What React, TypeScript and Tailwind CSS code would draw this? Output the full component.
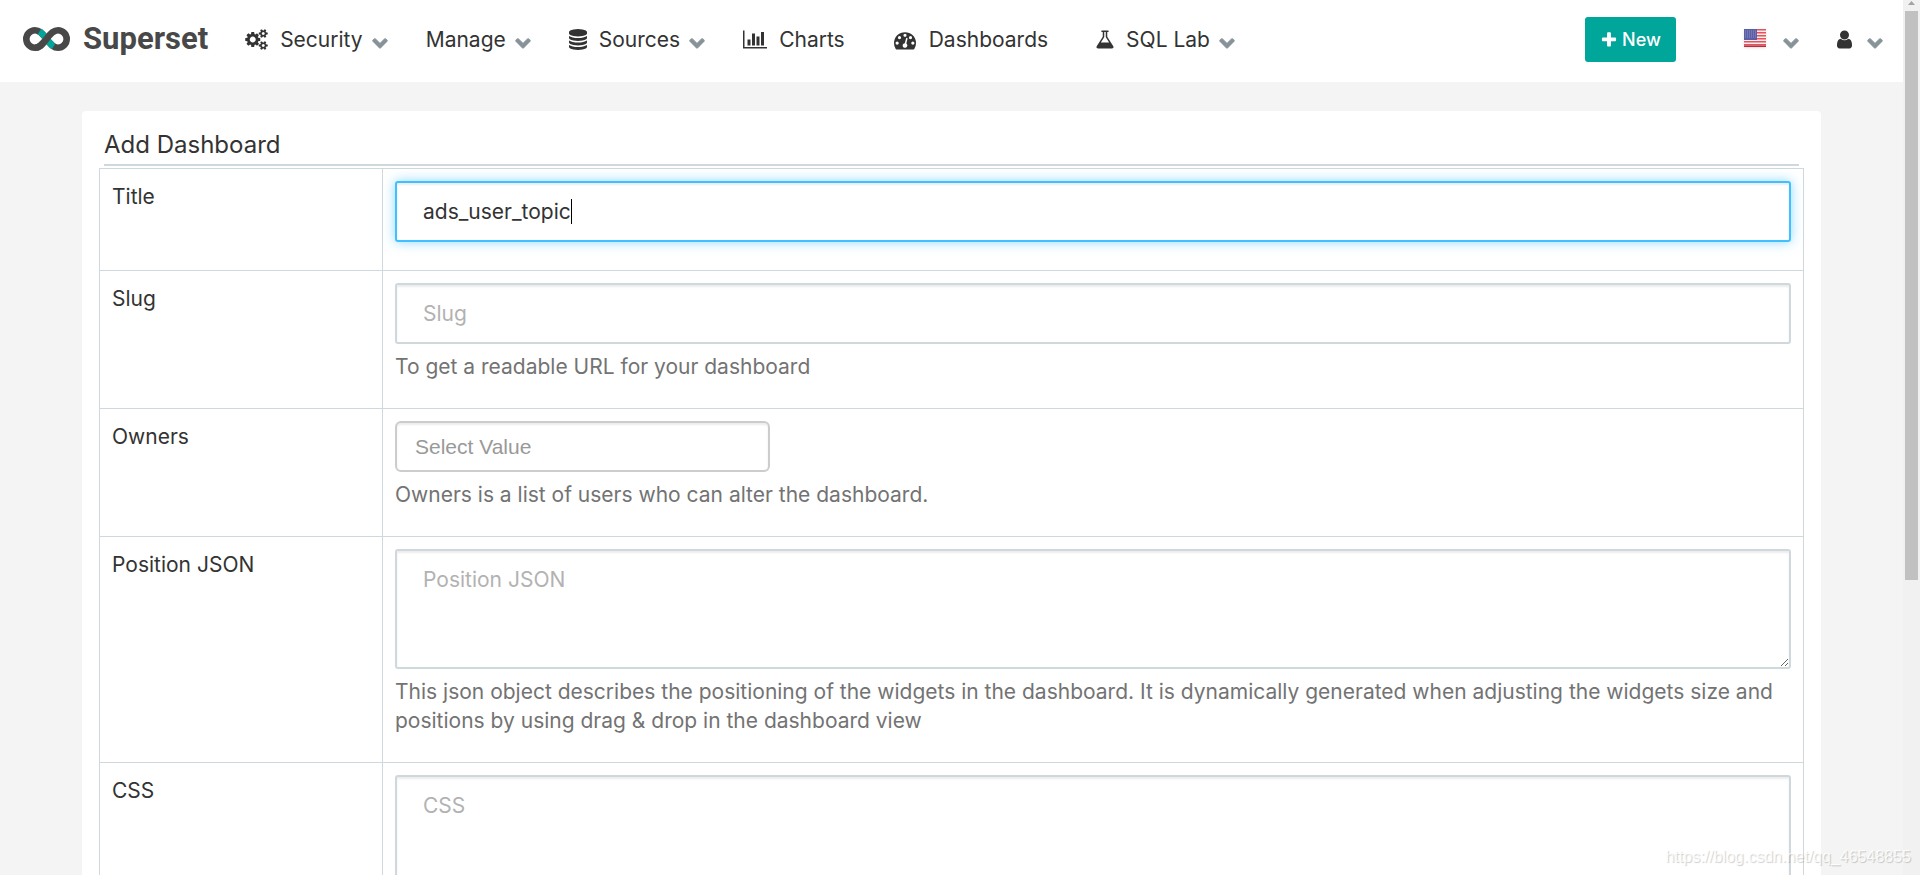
import { ReactNode } from 'react'

const paths = {
    cogs: 'M896 896q0-106-75-181t-181-75-181 75-75 181 75 181 181 75 181-75 75-181zm768 512q0-52-38-90t-90-38-90 38-38 90q0 53 37.5 90.5t90.5 37.5 90.5-37.5 37.5-90.5zm0-1024q0-52-38-90t-90-38-90 38-38 90q0 53 37.5 90.5t90.5 37.5 90.5-37.5 37.5-90.5zm-384 421v185q0 10-7 19.5t-16 10.5l-155 24q-11 35-32 76 34 48 90 115 7 11 7 20 0 12-7 19-23 30-82.5 89.5t-78.5 59.5q-11 0-21-7l-115-90q-37 19-77 31-11 108-23 155-7 24-30 24h-186q-11 0-20-7.5t-10-17.5l-23-153q-34-10-75-31l-118 89q-7 7-20 7-11 0-21-8-144-133-144-160 0-9 7-19 10-14 41-53t47-61q-23-44-35-82l-152-24q-10-1-17-9.5t-7-19.5v-185q0-10 7-19.5t16-10.5l155-24q11-35 32-76-34-48-90-115-7-11-7-20 0-12 7-20 22-30 82-89t79-59q11 0 21 7l115 90q34-18 77-32 11-108 23-154 7-24 30-24h186q11 0 20 7.5t10 17.5l23 153q34 10 75 31l118-89q8-7 20-7 11 0 21 8 144 133 144 160 0 8-7 19-12 16-42 54t-45 60q23 48 34 82l152 23q10 2 17 10.5t7 19.5zm640 533v140q0 16-149 31-12 27-30 52 51 113 51 138 0 4-4 7-122 71-124 71-8 0-46-47t-52-68q-20 2-30 2t-30-2q-14 21-52 68t-46 47q-2 0-124-71-4-3-4-7 0-25 51-138-18-25-30-52-149-15-149-31v-140q0-16 149-31 13-29 30-52-51-113-51-138 0-4 4-7 4-2 35-20t59-34 30-16q8 0 46 46.5t52 67.5q20-2 30-2t30 2q51-71 92-112l6-2q4 0 124 70 4 3 4 7 0 25-51 138 17 23 30 52 149 15 149 31zm0-1024v140q0 16-149 31-12 27-30 52 51 113 51 138 0 4-4 7-122 71-124 71-8 0-46-47t-52-68q-20 2-30 2t-30-2q-14 21-52 68t-46 47q-2 0-124-71-4-3-4-7 0-25 51-138-18-25-30-52-149-15-149-31v-140q0-16 149-31 13-29 30-52-51-113-51-138 0-4 4-7 4-2 35-20t59-34 30-16q8 0 46 46.5t52 67.5q20-2 30-2t30 2q51-71 92-112l6-2q4 0 124 70 4 3 4 7 0 25-51 138 17 23 30 52 149 15 149 31z',
    database:
        'M896 768q237 0 443-43t325-127v170q0 69-103 128t-280 93.5-385 34.5-385-34.5-280-93.5-103-128v-170q119 84 325 127t443 43zm0 768q237 0 443-43t325-127v170q0 69-103 128t-280 93.5-385 34.5-385-34.5-280-93.5-103-128v-170q119 84 325 127t443 43zm0-384q237 0 443-43t325-127v170q0 69-103 128t-280 93.5-385 34.5-385-34.5-280-93.5-103-128v-170q119 84 325 127t443 43zm0-1152q208 0 385 34.5t280 93.5 103 128v128q0 69-103 128t-280 93.5-385 34.5-385-34.5-280-93.5-103-128v-128q0-69 103-128t280-93.5 385-34.5z',
    barChart:
        'M640 896v512h-256v-512h256zm384-512v1024h-256v-1024h256zm1024 1152v128h-2048v-1536h128v1408h1920zm-640-896v768h-256v-768h256zm384-384v1152h-256v-1152h256z',
    dashboard:
        'M384 1152q0-53-37.5-90.5t-90.5-37.5-90.5 37.5-37.5 90.5 37.5 90.5 90.5 37.5 90.5-37.5 37.5-90.5zm192-448q0-53-37.5-90.5t-90.5-37.5-90.5 37.5-37.5 90.5 37.5 90.5 90.5 37.5 90.5-37.5 37.5-90.5zm428 481l101-382q6-26-7.5-48.5t-38.5-29.5-48 6.5-30 39.5l-101 382q-60 5-107 43.5t-63 98.5q-20 77 20 146t117 89 146-20 89-117q16-60-6-117t-72-91zm660-33q0-53-37.5-90.5t-90.5-37.5-90.5 37.5-37.5 90.5 37.5 90.5 90.5 37.5 90.5-37.5 37.5-90.5zm-640-640q0-53-37.5-90.5t-90.5-37.5-90.5 37.5-37.5 90.5 37.5 90.5 90.5 37.5 90.5-37.5 37.5-90.5zm448 192q0-53-37.5-90.5t-90.5-37.5-90.5 37.5-37.5 90.5 37.5 90.5 90.5 37.5 90.5-37.5 37.5-90.5zm320 448q0 261-141 483-19 29-54 29h-1402q-35 0-54-29-141-221-141-483 0-182 71-348t191-286 286-191 348-71 348 71 286 191 191 286 71 348z',
    flask: 'M1591 1448q56 89 21.5 152.5t-140.5 63.5h-1152q-106 0-140.5-63.5t21.5-152.5l503-793v-399h-64q-26 0-45-19t-19-45 19-45 45-19h512q26 0 45 19t19 45-19 45-45 19h-64v399zm-779-725l-272 429h712l-272-429-20-31v-436h-128v436z',
    plus: 'M1600 736v192q0 40-28 68t-68 28h-416v416q0 40-28 68t-68 28h-192q-40 0-68-28t-28-68v-416h-416q-40 0-68-28t-28-68v-192q0-40 28-68t68-28h416v-416q0-40 28-68t68-28h192q40 0 68 28t28 68v416h416q40 0 68 28t28 68z',
    user: 'M1536 1399q0 109-62.5 187t-150.5 78h-854q-88 0-150.5-78t-62.5-187q0-85 8.5-160.5t31.5-152 58.5-131 94-89 134.5-34.5q131 128 313 128t313-128q76 0 134.5 34.5t94 89 58.5 131 31.5 152 8.5 160.5zm-256-887q0 159-112.5 271.5t-271.5 112.5-271.5-112.5-112.5-271.5 112.5-271.5 271.5-112.5 271.5 112.5 112.5 271.5z',
    chevron:
        'M1683 808l-742 741q-19 19-45 19t-45-19l-742-741q-19-19-19-45.5t19-45.5l166-165q19-19 45-19t45 19l531 531 531-531q19-19 45-19t45 19l166 165q19 19 19 45.5t-19 45.5z',
}

const Icon = ({
    name,
    viewBox = '0 0 1792 1792',
    className,
}: {
    name: keyof typeof paths
    viewBox?: string
    className: string
}) => (
    <svg viewBox={viewBox} className={`shrink-0 fill-current ${className}`} aria-hidden="true">
        <path d={paths[name]} />
    </svg>
)

const Caret = () => (
    <Icon name="chevron" className="mt-1 h-4 w-4 stroke-current stroke-[120px] text-[#879399]" />
)

const Logo = () => (
    <svg viewBox="0 0 47 24" className="h-6 w-[47px]" aria-hidden="true">
        <g fill="none" strokeWidth="6.600">
            <path
                d="M23.500 12 C18.500 18.500 16 20.700 12 20.700 A8.700 8.700 0 0 1 12 3.300 C16 3.300 18.500 5.500 23.500 12 C28.500 18.500 31 20.700 35 20.700 A8.700 8.700 0 0 0 35 3.300"
                stroke="#484848"
            />
            <path d="M16.500 4.500 C19 6 21 8.700 23.500 12 C26 15.300 28 18 30.500 19.500" stroke="#00a699" />
            <path
                d="M12 20.700 C16 20.700 18.500 18.500 23.500 12 C28.500 5.500 31 3.300 35 3.300"
                stroke="#484848"
            />
        </g>
    </svg>
)

const Flag = () => (
    <svg viewBox="0 0 22 18" className="mb-[3px] h-[18px] w-[22px] shadow-sm" role="img" aria-label="English">
        <rect width="22" height="18" fill="#f7eeee" />
        {[0, 3, 6, 9, 12, 15].map((y) => (
            <rect key={y} y={y} width="22" height="1.500" fill="#e8505b" />
        ))}
        <rect y="16.500" width="22" height="1.500" fill="#b52f40" />
        <rect width="13" height="11" fill="#5a5fa5" />
        {[2, 4, 6, 8].map((y) => (
            <path key={y} d={`M1 ${y}h11`} stroke="#8f92c8" strokeWidth="1" strokeDasharray="1 1" />
        ))}
    </svg>
)

const NavItem = ({ icon, label, caret }: { icon?: ReactNode; label: string; caret?: boolean }) => (
    <li>
        <a href="#" className={`flex items-center gap-[9px] ${caret ? '' : 'pr-[10px]'}`}>
            {icon && <span className="pr-[3px]">{icon}</span>}
            <span>{label}</span>
            {caret && <Caret />}
        </a>
    </li>
)

const Navbar = () => (
    <header className="flex h-[82px] shrink-0 items-center bg-white pr-5 pb-[3px] pl-[23px]">
        <a href="#" className="flex items-center gap-[13px] pb-[2px]">
            <Logo />
            <span className="font-[Roboto] text-[31px] leading-8 font-bold text-[#484848]">
                Superset
            </span>
        </a>
        <nav className="flex flex-1 items-center justify-between pl-[37px]">
            <ul className="flex items-center gap-[38px]">
                <NavItem
                    icon={<Icon name="cogs" viewBox="0 0 1920 1792" className="h-[21px] w-[23px]" />}
                    label="Security"
                    caret
                />
                <NavItem label="Manage" caret />
                <NavItem
                    icon={<Icon name="database" viewBox="128 0 1536 1792" className="h-[21px] w-[18px]" />}
                    label="Sources"
                    caret
                />
                <NavItem
                    icon={<Icon name="barChart" viewBox="0 0 2048 1792" className="h-[21px] w-6" />}
                    label="Charts"
                />
                <NavItem
                    icon={<Icon name="dashboard" className="h-[22px] w-6" />}
                    label="Dashboards"
                />
                <NavItem
                    icon={<Icon name="flask" viewBox="128 0 1536 1792" className="h-[21px] w-[18px]" />}
                    label="SQL Lab"
                    caret
                />
            </ul>
            <div className="flex items-center">
                <button className="mr-[68px] flex h-[45px] w-[91px] items-center justify-center gap-1 rounded-[3px] bg-[#00a699] text-[18px] font-medium text-white">
                    <Icon name="plus" className="h-[18px] w-[18px]" />
                    New
                </button>
                <a href="#" className="mr-[38px] flex items-center gap-[17px]">
                    <Flag />
                    <Caret />
                </a>
                <a href="#" className="flex items-center gap-[15px]" aria-label="Profile">
                    <Icon name="user" viewBox="256 0 1280 1792" className="h-[21px] w-[15px]" />
                    <Caret />
                </a>
            </div>
        </nav>
    </header>
)

const Row = ({
    id,
    label,
    help,
    children,
}: {
    id: string
    label: string
    help?: string
    children: ReactNode
}) => (
    <tr>
        <th scope="row" className="w-[283px] border border-[#cfd8dc] px-3 py-[13px] text-left align-top font-normal">
            <label htmlFor={id}>{label}</label>
        </th>
        <td className="border border-[#cfd8dc] px-3 pt-3 pb-7 align-top">
            {children}
            {help && <p className="mt-2 -mb-px text-[#737373]">{help}</p>}
        </td>
    </tr>
)

const field =
    'block w-full rounded-[3px] border-2 border-[#cfd8dc] bg-white px-[26px] py-[14px] shadow-[inset_0_2px_2px_rgba(0,0,0,0.075)] outline-none placeholder:text-[#b2b2b2]'

const Scrollbar = () => (
    <div className="flex w-[17px] shrink-0 flex-col items-center bg-[#f1f1f1]" aria-hidden="true">
        <svg viewBox="0 0 7 11" className="h-[11px] w-[7px]">
            <path d="M0 5L3.500 1L7 5z" fill="#a3a3a3" />
        </svg>
        <div className="h-[65%] w-[13px] bg-[#c1c1c1]" />
    </div>
)

const App = () => (
    <div className="relative flex h-screen overflow-hidden bg-[#f4f4f4] font-[Inter,sans-serif] text-[21px] leading-[29px] font-normal text-[#333]">
        <div className="flex min-w-0 flex-1 flex-col overflow-hidden">
            <Navbar />
            <main className="mx-[82px] mt-[29px] shrink-0 rounded-[4px] bg-white px-[17px] pb-8">
                <h1 className="mx-[5px] border-b-2 border-[#cfd8dc] pt-[18px] pb-[3px] text-2xl">
                    Add Dashboard
                </h1>
                <form className="pt-[2px]">
                    <table className="w-full border-collapse">
                        <tbody>
                            <Row id="title" label="Title">
                                <div className="relative">
                                    <input
                                        id="title"
                                        defaultValue="ads_user_topic"
                                        className="block w-full rounded-[3px] border-2 border-[#41c0ff] bg-white px-[26px] py-[14px] shadow-[inset_0_2px_2px_rgba(0,0,0,0.075),0_0_12px_rgba(65,192,255,0.6)] outline-none"
                                    />
                                    <span className="absolute top-[18px] left-[176px] h-[25px] w-px bg-black" />
                                </div>
                            </Row>
                            <Row id="slug" label="Slug" help="To get a readable URL for your dashboard">
                                <input id="slug" placeholder="Slug" className={field} />
                            </Row>
                            <Row
                                id="owners"
                                label="Owners"
                                help="Owners is a list of users who can alter the dashboard."
                            >
                                <select
                                    id="owners"
                                    className="block h-[51px] w-[375px] appearance-none rounded-[6px] border-2 border-[#ccc] bg-white px-[18px] font-['Liberation_Sans',sans-serif] text-[21px] font-normal text-[#999] shadow-[inset_0_2px_2px_rgba(0,0,0,0.075)] outline-none"
                                >
                                    <option>Select Value</option>
                                </select>
                            </Row>
                            <Row
                                id="position"
                                label="Position JSON"
                                help="This json object describes the positioning of the widgets in the dashboard. It is dynamically generated when adjusting the widgets size and positions by using drag & drop in the dashboard view"
                            >
                                <textarea
                                    id="position"
                                    rows={3}
                                    placeholder="Position JSON"
                                    className={`${field} h-[120px] resize-y`}
                                />
                            </Row>
                            <Row id="css" label="CSS">
                                <textarea id="css" rows={3} placeholder="CSS" className={`${field} h-[120px] resize-y`} />
                            </Row>
                        </tbody>
                    </table>
                </form>
            </main>
        </div>
        <Scrollbar />
        <span className="absolute right-[9px] bottom-[6px] font-['Liberation_Sans',sans-serif] text-base leading-6 font-normal text-white/80 [text-shadow:1px_1px_1px_rgba(0,0,0,0.2)]">
            https://blog.csdn.net/qq_46548855
        </span>
    </div>
)

export default App
